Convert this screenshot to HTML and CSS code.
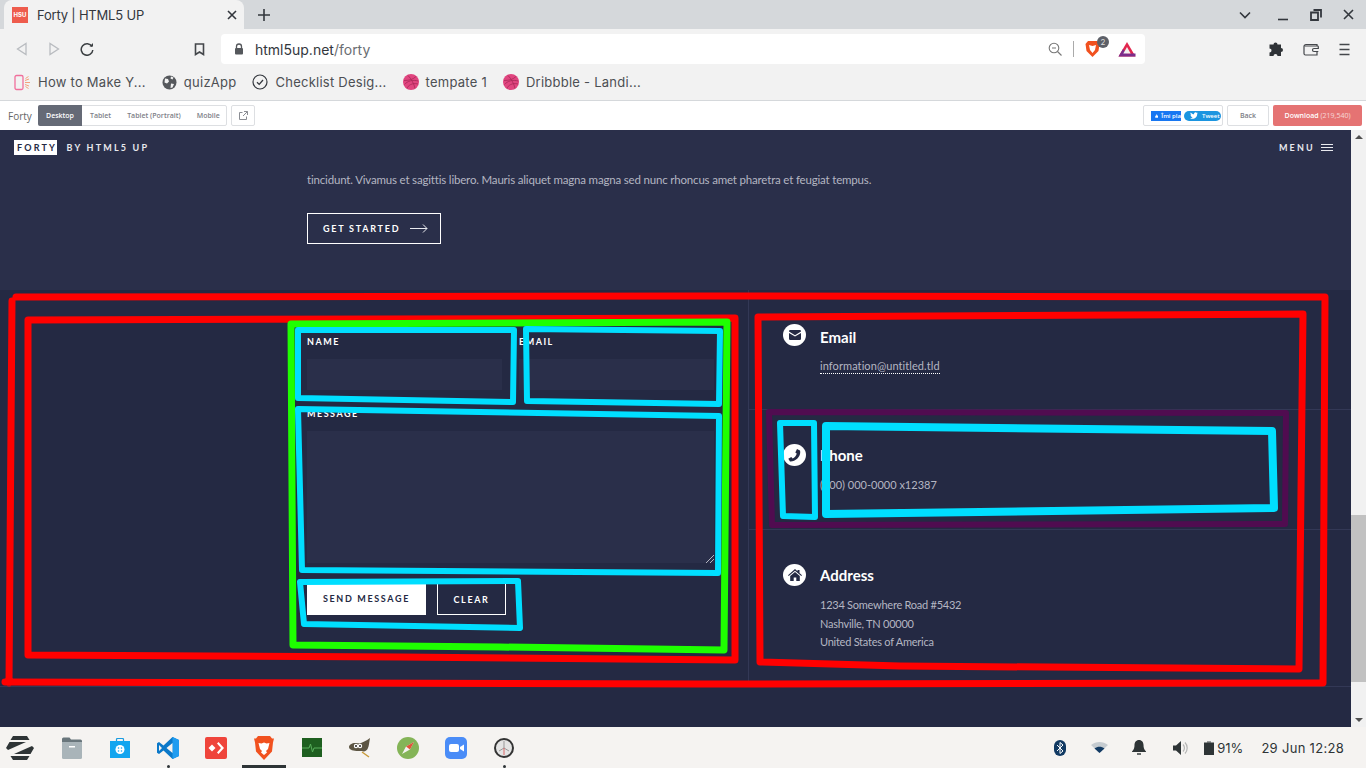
FILE: index.html
```html
<!DOCTYPE html>
<html lang="en">
<head>
    <meta charset="UTF-8">
    <meta name="viewport" content="width=device-width, initial-scale=1.0">
    <title>Forty | HTML5 UP</title>
    <link rel="stylesheet" href="styles.css">
</head>
<body>
    <!-- tab strip -->
    <div class="tabstrip">
        <div class="tab">
            <span class="favicon">HSU</span>
            <span class="tab-title">Forty | HTML5 UP</span>
            <svg class="tab-close" width="10" height="10" viewBox="0 0 10 10"><path d="M1 1l8 8M9 1L1 9" stroke="#33373d" stroke-width="1.6"/></svg>
        </div>
        <svg class="new-tab" width="14" height="14" viewBox="0 0 14 14"><path d="M7 1v12M1 7h12" stroke="#33373d" stroke-width="1.6"/></svg>
        <div class="window-controls">
            <svg class="tab-list" width="12" height="8" viewBox="0 0 12 8"><path d="M1 1.500l5 5 5-5" fill="none" stroke="#33373d" stroke-width="1.6"/></svg>
            <svg width="12" height="12" viewBox="0 0 12 12"><path d="M1 10.500h10" stroke="#33373d" stroke-width="1.6"/></svg>
            <svg width="12" height="12" viewBox="0 0 12 12"><path d="M3.500 1h7.500v7.500M1 3.500h7v7.500H1z" fill="none" stroke="#33373d" stroke-width="1.800"/></svg>
            <svg width="11" height="11" viewBox="0 0 11 11"><path d="M1 1l9 9M10 1l-9 9" stroke="#33373d" stroke-width="1.600"/></svg>
        </div>
    </div>

    <!-- address bar -->
    <div class="toolbar">
        <div class="nav-buttons">
            <svg width="12" height="14" viewBox="0 0 12 14"><path d="M10 1.500v11L1.500 7z" fill="none" stroke="#b9bcc0" stroke-width="1.300"/></svg>
            <svg width="12" height="14" viewBox="0 0 12 14"><path d="M2 1.500v11L10.500 7z" fill="none" stroke="#b9bcc0" stroke-width="1.300"/></svg>
            <svg width="14" height="14" viewBox="0 0 14 14"><path d="M12 4.500A5.800 5.800 0 1 0 12.800 8" fill="none" stroke="#3c4043" stroke-width="1.500"/><path d="M9.500 4.500h3.500V1z" fill="#3c4043"/></svg>
        </div>
        <svg class="bookmark-btn" width="11" height="13" viewBox="0 0 11 13"><path d="M1.500 1h8v10.500L5.500 9l-4 2.500z" fill="none" stroke="#44474b" stroke-width="1.600"/></svg>
        <div class="address">
            <svg width="10" height="12" viewBox="0 0 10 12"><path d="M2.500 5V3.500a2.500 2.500 0 0 1 5 0V5" fill="none" stroke="#55585c" stroke-width="1.300"/><rect x="1" y="5" width="8" height="6.500" rx="1" fill="#55585c"/></svg>
            <span class="url">html5up.net<span class="url-path">/forty</span></span>
            <svg class="zoom-out" width="14" height="14" viewBox="0 0 14 14"><circle cx="6" cy="6" r="4.800" fill="none" stroke="#777" stroke-width="1.100"/><path d="M4 6h4M9.500 9.500L13.500 13.500" stroke="#777" stroke-width="1.100"/></svg>
            <span class="address-sep"></span>
            <span class="shield">
                <svg width="15" height="18" viewBox="0 0 15 18"><path d="M3 1h9l2.500 3-1 7-6 6-6-6-1-7z" fill="#f1511f"/><path d="M4 5l3.500 1L11 5l-1 5-2.500 3L5 10z" fill="#fff"/></svg>
                <span class="shield-badge">2</span>
            </span>
            <svg class="bat" width="18" height="16" viewBox="0 0 18 16"><path d="M9 1L17.500 15.500H.5z" fill="#e2264d"/><path d="M.5 15.500L5 8l4 4.500h8.500v3z" fill="#7b2d8b"/><path d="M9 6l3.700 6.500H5.300z" fill="#f1f1f1"/></svg>
        </div>
        <div class="toolbar-actions">
            <svg width="15" height="15" viewBox="0 0 15 15"><path d="M5.500 2.500a2 2 0 0 1 4 0H13v3.500a2 2 0 0 1 0 4V14H9.500a2 2 0 0 0-4 0H1.500v-3.500a2 2 0 0 0 0-4V2.500z" fill="#2f3337"/></svg>
            <svg width="16" height="13" viewBox="0 0 16 13"><path d="M14 3V1.500H3A2 2 0 0 0 1 3.500v7A1.500 1.500 0 0 0 2.500 12H14V9" fill="none" stroke="#44474b" stroke-width="1.200"/><path d="M1.500 3h13a.8.8 0 0 1 .8.8v1.700H11a1.500 1.500 0 0 0 0 3h4.300" fill="none" stroke="#44474b" stroke-width="1.200"/></svg>
            <svg width="11" height="13" viewBox="0 0 11 13"><path d="M.5 1.500h10M.5 6.500h10M.5 11.500h10" stroke="#44474b" stroke-width="1.600"/></svg>
        </div>
    </div>

    <!-- bookmarks -->
    <div class="bookmarks">
        <div class="bookmark">
            <svg width="17" height="17" viewBox="0 0 17 17"><rect x="1" y="1.500" width="8" height="14" rx="1.500" fill="none" stroke="#f06f9b" stroke-width="1.300"/><path d="M11 8.500h5M11.500 4.500l3-2M11.500 12.500l3 2M11 6.500l4-1.500M11 10.500l4 1.500" stroke="#f4a07a" stroke-width="1"/></svg>
            <span>How to Make Y...</span>
        </div>
        <div class="bookmark">
            <svg width="15" height="15" viewBox="0 0 15 15"><circle cx="7.500" cy="7.500" r="7" fill="#55585c"/><path d="M3 3.500l3 .5 1 2.500-2 2-2.500-1zM9 8.500l3 .5-1.500 3.500-2 .5z M9 1.500l2.500 1-1 2-2-1z" fill="#f2f2f2"/></svg>
            <span>quizApp</span>
        </div>
        <div class="bookmark">
            <svg width="16" height="16" viewBox="0 0 16 16"><circle cx="8" cy="8" r="7" fill="none" stroke="#33373d" stroke-width="1.200"/><path d="M5 8.200l2.200 2.200L11 6" fill="none" stroke="#33373d" stroke-width="1.300"/></svg>
            <span>Checklist Desig...</span>
        </div>
        <div class="bookmark">
            <svg width="16" height="16" viewBox="0 0 16 16"><circle cx="8" cy="8" r="8" fill="#e0457f"/><path d="M5 1.500c3 3 6 8 7 13M1 6.500c5 0 9-1 12-4M1.500 10.500c3-3.500 8-5 14-3.500M4 14.500c1-3 5-6 11-4.500" fill="none" stroke="#a82858" stroke-width=".8"/></svg>
            <span>tempate 1</span>
        </div>
        <div class="bookmark">
            <svg width="16" height="16" viewBox="0 0 16 16"><circle cx="8" cy="8" r="8" fill="#e0457f"/><path d="M5 1.500c3 3 6 8 7 13M1 6.500c5 0 9-1 12-4M1.500 10.500c3-3.500 8-5 14-3.500M4 14.500c1-3 5-6 11-4.500" fill="none" stroke="#a82858" stroke-width=".8"/></svg>
            <span>Dribbble - Landi...</span>
        </div>
    </div>

    <!-- html5up preview bar -->
    <div class="previewbar">
        <span class="preview-name">Forty</span>
        <div class="device-tabs">
            <span class="device device-active">Desktop</span>
            <span class="device">Tablet</span>
            <span class="device">Tablet (Portrait)</span>
            <span class="device">Mobile</span>
        </div>
        <span class="popout">
            <svg width="9" height="9" viewBox="0 0 9 9"><path d="M7.500 5.500v3h-7v-7h3M5 .5h3.500V4M8.500 .5L4 5" fill="none" stroke="#8a8d93" stroke-width="1"/></svg>
        </span>
        <div class="social">
            <span class="fb-like">
                <svg width="8" height="8" viewBox="0 0 8 8"><path d="M0 3.500h1.800V8H0zM2.500 3.500L4 0c.9 0 1.200.7 1 1.500L4.800 3H8L7 8H2.500z" fill="#fff"/></svg>
                <span>Îmi pla</span>
            </span>
            <span class="tweet">
                <svg width="8" height="7" viewBox="0 0 8 7"><path d="M8 1l-.9.4.7-.9-.9.4A1.600 1.600 0 0 0 4.100 2.300C2.800 2.200 1.600 1.600.7.500.2 1.400.5 2.400 1.200 2.900L.5 2.700c0 .8.500 1.400 1.300 1.600H1.100c.2.600.8 1.100 1.500 1.100C2 6 1 6.300 0 6.200 3.700 8.100 7.400 5.500 7.200 1.800z" fill="#fff"/></svg>
                <span>Tweet</span>
            </span>
        </div>
        <span class="back-btn">Back</span>
        <span class="download-btn">Download <span class="download-count">(219,540)</span></span>
    </div>

    <!-- the page itself -->
    <div class="viewport">
        <div class="site">
            <header class="site-header">
                <div class="logo"><span class="logo-box">FORTY</span> BY HTML5 UP</div>
                <div class="menu-link">
                    MENU
                    <svg width="12" height="7" viewBox="0 0 12 7"><path d="M0 .5h12M0 3.500h12M0 6.500h12" stroke="#e8e9ee" stroke-width="1"/></svg>
                </div>
            </header>

            <section class="banner">
                <p class="banner-text">Nullam et orci eu lorem consequat tincidunt vivamus et sagittis magna sed nunc rhoncus condimentum sem. In efficitur ligula tate urna. Maecenas massa magna<br>tincidunt. Vivamus et sagittis libero. Mauris aliquet magna magna sed nunc rhoncus amet pharetra et feugiat tempus.</p>
                <a class="btn-started">
                    GET STARTED
                    <svg width="18" height="9" viewBox="0 0 18 9"><path d="M0 4.500h17M13 .5l4 4-4 4" fill="none" stroke="#e8e9ee" stroke-width="1"/></svg>
                </a>
            </section>

            <section class="contact">
                <form class="contact-form">
                    <div class="field-row">
                        <div class="field">
                            <label>NAME</label>
                            <div class="input"></div>
                        </div>
                        <div class="field">
                            <label>EMAIL</label>
                            <div class="input"></div>
                        </div>
                    </div>
                    <div class="field">
                        <label>MESSAGE</label>
                        <div class="textarea">
                            <svg class="resizer" width="8" height="8" viewBox="0 0 8 8"><path d="M0 8l8-8M4 8l4-4" stroke="#b4b6c0" stroke-width="1"/></svg>
                        </div>
                    </div>
                    <div class="form-actions">
                        <span class="btn-send">SEND MESSAGE</span>
                        <span class="btn-clear">CLEAR</span>
                    </div>
                </form>

                <div class="contact-info">
                    <div class="info-row">
                        <span class="info-icon">
                            <svg width="12" height="10" viewBox="0 0 12 10"><path d="M1.200 0h9.600A1.200 1.200 0 0 1 12 1.200v.4L6 5.200 0 1.600v-.4A1.200 1.200 0 0 1 1.200 0zM0 3l6 3.600L12 3v5.800A1.200 1.200 0 0 1 10.800 10H1.200A1.200 1.200 0 0 1 0 8.800z" fill="#242943"/></svg>
                        </span>
                        <div>
                            <h3>Email</h3>
                            <a class="info-link">information@untitled.tld</a>
                        </div>
                    </div>
                    <div class="info-row">
                        <span class="info-icon">
                            <svg width="13" height="13" viewBox="0 0 13 13"><path d="M9 0l3 1.500c1.500 5.500-4.500 11.500-10 11L.3 9.700l3-1.700 1.300 1.500C6.500 9 8.500 6.500 8.700 4.600L7.300 3.500z" fill="#242943"/></svg>
                        </span>
                        <div>
                            <h3>Phone</h3>
                            <p>(000) 000-0000 x12387</p>
                        </div>
                    </div>
                    <div class="info-row info-row-last">
                        <span class="info-icon">
                            <svg width="14" height="12" viewBox="0 0 14 12"><path d="M7 0l2.500 2.200V1h2v3l2.500 2.200-.7.800L7 1.700.7 7 0 6.200z" fill="#242943"/><path d="M2.200 7L7 3l4.800 4v5H8.300V8.500H5.700V12H2.200z" fill="#242943"/></svg>
                        </span>
                        <div>
                            <h3>Address</h3>
                            <p class="info-address">1234 Somewhere Road #5432<br>Nashville, TN 00000<br>United States of America</p>
                        </div>
                    </div>
                </div>
            </section>
        </div>

        <div class="scrollbar">
            <span class="arrow-up"></span>
            <div class="scroll-track"><div class="scroll-thumb"></div></div>
            <span class="arrow-down"></span>
        </div>
    </div>

    <!-- desktop panel -->
    <div class="taskbar">
        <div class="launcher">
            <span class="app"><svg width="28" height="24" viewBox="0 0 28 24"><path d="M7 0h14l2.500 4h-19zM4.500 20h19L21 24H7zM3.500 6H20L2 14l-2-2zM24.500 18H8l18-8 2 2z" fill="#2e3436"/></svg></span>
            <span class="app"><svg width="20" height="22" viewBox="0 0 20 22"><path d="M0 2a1.500 1.500 0 0 1 1.500-1.500h6l1.500 2h9.500A1.500 1.500 0 0 1 20 4v2H0z" fill="#69767c"/><path d="M0 5h20v15.500a1.500 1.500 0 0 1-1.500 1.500h-17A1.500 1.500 0 0 1 0 20.500z" fill="#a9b4b9"/><rect x="7" y="9" width="6" height="1.500" fill="#fff"/></svg></span>
            <span class="app"><svg width="20" height="20" viewBox="0 0 20 20"><path d="M6.500 3V1.500a1 1 0 0 1 1-1h5a1 1 0 0 1 1 1V3" fill="none" stroke="#1a9be0" stroke-width="1.200"/><rect y="3" width="20" height="17" fill="#12a5ef"/><circle cx="10" cy="11.500" r="4.500" fill="#fff"/><circle cx="8.500" cy="10" r=".8" fill="#12a5ef"/><circle cx="11.500" cy="10" r=".8" fill="#12a5ef"/><circle cx="8.500" cy="13" r=".8" fill="#12a5ef"/><circle cx="11.500" cy="13" r=".8" fill="#12a5ef"/></svg></span>
            <span class="app app-running"><svg width="22" height="22" viewBox="0 0 22 22"><path d="M15.500 0L22 3v16l-6.500 3L6.500 13.500 2 17l-2-1.200v-9.600L2 5l4.500 3.500z" fill="#0a78c9"/><path d="M15.500 0L22 3v16l-6.500 3z" fill="#1f9cf0"/><path d="M15.500 6L9.500 11l6 5zM2 8v6l3-3z" fill="#f5f3f1"/></svg></span>
            <span class="app"><svg width="22" height="22" viewBox="0 0 22 22"><rect width="22" height="22" rx="2" fill="#ef443b"/><path d="M7 7.500L10.500 11 7 14.500 3.500 11z" fill="#fff"/><path d="M12 6.500l1.500-1.500L19 11l-5.500 6-1.500-1.500L16 11z" fill="#fff"/></svg></span>
            <span class="app app-focused"><svg width="20" height="24" viewBox="0 0 20 24"><path d="M4 0h12l2 2.500 2 0-1 4-1 9-8 8.500-8-8.500-1-9-1-4 2 0z" fill="#f1511f"/><path d="M4.500 7l3 .5L10 6.500l2.500 1 3-.5-1.500 6-2 2 1 1.500-3 2.500-3-2.500 1-1.500-2-2z" fill="#fff"/></svg></span>
            <span class="app"><svg width="20" height="19" viewBox="0 0 20 19"><rect width="20" height="19" fill="#1e5f20"/><path d="M0 10h7l1.500-4 2 8 1.500-4h8" fill="none" stroke="#58b05c" stroke-width="1"/></svg></span>
            <span class="app"><svg width="22" height="20" viewBox="0 0 22 20"><path d="M0 9c0-2 3-4 6-4s4 1 6 0 5-2 9-5c-1 5-1 8-2 10-1 3-4 4-6 3l-4 0c-4 0-9-1-9-4z" fill="#5c5543"/><circle cx="7" cy="8" r="2.200" fill="#fff"/><circle cx="11" cy="8" r="2.200" fill="#fff"/><circle cx="7" cy="8" r="1" fill="#222"/><circle cx="11" cy="8" r="1" fill="#222"/><path d="M13 14l7 5" stroke="#c89a3a" stroke-width="1.500"/></svg></span>
            <span class="app"><svg width="22" height="22" viewBox="0 0 22 22"><circle cx="11" cy="11" r="11" fill="#84b457"/><path d="M17 5l-8 4.500L5 17l8-4.500z" fill="#f3f3ee"/><path d="M17 5l-8 4.500 4 3z" fill="#e0543a"/></svg></span>
            <span class="app"><svg width="22" height="22" viewBox="0 0 22 22"><rect width="22" height="22" rx="5" fill="#4a8cf7"/><rect x="4" y="7" width="10" height="8" rx="2" fill="#fff"/><path d="M15 10l4-2.500v7L15 12z" fill="#fff"/></svg></span>
            <span class="app app-running"><svg width="20" height="20" viewBox="0 0 20 20"><circle cx="10" cy="10" r="9" fill="#e4e4e4" stroke="#333" stroke-width="2"/><path d="M10 10V3M10 10l5 3M10 10l-5 3" stroke="#999" stroke-width="1"/><path d="M10 10v7" stroke="#d66" stroke-width="1"/></svg></span>
        </div>
        <div class="tray">
            <svg class="tray-bt" width="12" height="16" viewBox="0 0 12 16"><rect width="12" height="16" rx="6" fill="#123a63"/><path d="M3 5l6 6-3 2.500v-11L9 5l-6 6" fill="none" stroke="#fff" stroke-width="1"/></svg>
            <svg class="tray-wifi" width="17" height="11" viewBox="0 0 17 11"><path d="M0 3C5-1 12-1 17 3l-8.500 8z" fill="#c5cbd0"/><path d="M3.500 6.500c3-2.500 7-2.500 10 0l-5 4.500z" fill="#123a63"/></svg>
            <svg class="tray-bell" width="14" height="15" viewBox="0 0 14 15"><path d="M7 0c3 0 4.500 2.500 4.500 5s.5 4.500 2.500 6.500V12H0v-.5C2 9.500 2.500 7.500 2.500 5S4 0 7 0z" fill="#2e3436"/><rect x="5" y="13.300" width="4" height="1.400" fill="#2e3436"/></svg>
            <svg class="tray-vol" width="15" height="14" viewBox="0 0 15 14"><path d="M0 4.500h3L8 0v14L3 9.500H0z" fill="#2e3436"/><path d="M10 3.500a5 5 0 0 1 0 7M12 1.500a8 8 0 0 1 0 11" fill="none" stroke="#b5b5b5" stroke-width="1.200"/></svg>
            <div class="tray-battery">
                <svg width="10" height="14" viewBox="0 0 10 14"><rect x="3" width="4" height="2" fill="#9a9c9d"/><rect y="1.500" width="10" height="12.500" fill="#2e3436"/></svg>
                <span>91%</span>
            </div>
            <span class="tray-clock">29 Jun 12:28</span>
        </div>
    </div>

    <!-- marker strokes drawn on the screenshot -->
    <svg class="markup" width="1366" height="768" viewBox="0 0 1366 768">
        <g fill="none" stroke-linejoin="round" stroke-linecap="round">
            <path d="M9 683L12 301M16 297L700 296 1325 297 1323 683 700 684 5 682" stroke="#ff0000" stroke-width="7"/>
            <path d="M28 655L28 320 735 318 735 660 400 657z" stroke="#ff0000" stroke-width="7"/>
            <path d="M758 317L1303 314 1299 669 900 666 760 662z" stroke="#ff0000" stroke-width="7"/>
            <path d="M769 412L1286 413 1285 524 772 525z" stroke="#500c50" stroke-width="6"/>
            <path d="M293 645L291 324 727 322 724 650 500 647z" stroke="#1eff00" stroke-width="7"/>
            <path d="M298 330L514 330 513 402 298 398z" stroke="#00deff" stroke-width="6"/>
            <path d="M526 329L720 331 719 404 527 401z" stroke="#00deff" stroke-width="6"/>
            <path d="M298 409L719 416 718 573 302 570z" stroke="#00deff" stroke-width="6"/>
            <path d="M300 582L518 581 520 628 304 624z" stroke="#00deff" stroke-width="6"/>
            <path d="M780 423L814 423 815 517 783 516z" stroke="#00deff" stroke-width="6"/>
            <path d="M826 426L1272 431 1274 508 826 514z" stroke="#00deff" stroke-width="8"/>
        </g>
    </svg>
</body>
</html>
```

FILE: styles.css
```css
* {
    box-sizing: border-box;
}

body {
    position: relative;
    display: flex;
    flex-direction: column;
    width: 1366px;
    height: 100vh;
    margin: 0;
    overflow: hidden;
    font-family: Inter, "Noto Sans", sans-serif;
    color: #3c4043;
    background-color: #f2f2f2;
}

/* Tab strip */
.tabstrip {
    display: flex;
    align-items: center;
    height: 29px;
    padding-left: 4px;
    background-color: #d5d8db;
}

.tab {
    display: flex;
    align-items: center;
    width: 240px;
    height: 29px;
    padding: 0 8px;
    background-color: #f2f2f2;
    border-radius: 8px 8px 0 0;
}

.favicon {
    width: 16px;
    height: 16px;
    background-color: #ee5c4d;
    color: #fff;
    font-size: 6px;
    font-weight: 700;
    line-height: 16px;
    text-align: center;
}

.tab-title {
    flex: 1;
    margin-left: 9px;
    font-size: 13px;
    letter-spacing: -0.2px;
    color: #33373d;
}

.tab-close {
    margin-right: -1px;
}

.new-tab {
    margin-left: 13px;
}

.window-controls {
    display: flex;
    align-items: center;
    gap: 21px;
    margin-left: auto;
    padding-right: 12px;
}

.tab-list {
    margin-right: 5px;
}

/* Toolbar */
.toolbar {
    display: flex;
    align-items: center;
    height: 37px;
    padding: 3px 0 0 16px;
    background-color: #f2f2f2;
}

.nav-buttons {
    display: flex;
    align-items: center;
    gap: 20px;
    width: 178px;
}

.bookmark-btn {
    margin-right: 16px;
}

.address {
    display: flex;
    align-items: center;
    width: 924px;
    height: 30px;
    padding: 0 9px 0 13px;
    background-color: #fff;
    border-radius: 4px;
}

.url {
    flex: 1;
    margin-left: 11px;
    font-size: 14px;
    color: #33373d;
}

.url-path {
    color: #6a6d72;
}

.address-sep {
    width: 1px;
    height: 16px;
    margin: 0 11px;
    background-color: #aaa;
}

.shield {
    position: relative;
    display: flex;
    width: 33px;
}

.shield-badge {
    position: absolute;
    top: -4px;
    left: 12px;
    width: 12px;
    height: 12px;
    border-radius: 50%;
    background-color: #5d6068;
    color: #ddd;
    font-size: 8px;
    line-height: 12px;
    text-align: center;
}

.toolbar-actions {
    display: flex;
    align-items: center;
    gap: 20px;
    margin-left: 123px;
}

/* Bookmarks */
.bookmarks {
    display: flex;
    align-items: center;
    height: 35px;
    padding: 0 0 2px 14px;
    gap: 16px;
    background-color: #f2f2f2;
    border-bottom: 1px solid #d5d8db;
}

.bookmark {
    display: flex;
    align-items: center;
    gap: 7px;
    font-size: 13px;
    letter-spacing: 0.25px;
    color: #4c4f53;
}

/* Preview bar */
.previewbar {
    display: flex;
    align-items: center;
    height: 29px;
    padding: 0 4px 0 8px;
    background-color: #fff;
    font-family: "Open Sans", sans-serif;
    font-size: 7px;
    font-weight: 600;
    color: #7d8087;
    white-space: nowrap;
}

.preview-name {
    width: 30px;
    font-size: 10px;
    font-weight: 400;
    color: #666;
}

.device-tabs {
    display: flex;
    align-items: center;
    width: 189px;
    height: 21px;
    border: 1px solid #dddfe2;
    border-radius: 2px;
}

.device {
    padding: 0 8px;
    line-height: 19px;
}

.device-active {
    width: 44px;
    margin: -1px 0 -1px -1px;
    line-height: 21px;
    background-color: #656a76;
    border-radius: 2px 0 0 2px;
    color: #fff;
}

.popout {
    display: flex;
    align-items: center;
    justify-content: center;
    width: 24px;
    height: 21px;
    margin-left: 4px;
    border: 1px solid #dddfe2;
    border-radius: 2px;
}

.social {
    display: flex;
    align-items: center;
    gap: 3px;
    width: 80px;
    height: 21px;
    margin-left: auto;
    padding-left: 7px;
    border: 1px solid #dddfe2;
    border-radius: 2px;
}

.fb-like {
    display: flex;
    align-items: center;
    gap: 3px;
    width: 30px;
    height: 10px;
    padding-left: 4px;
    overflow: hidden;
    background-color: #1877f2;
    color: #fff;
    font-size: 6px;
}

.tweet {
    display: flex;
    align-items: center;
    gap: 4px;
    width: 37px;
    height: 10px;
    padding-left: 6px;
    border-radius: 5px;
    background-color: #1b95e0;
    color: #fff;
    font-size: 6px;
}

.back-btn {
    width: 42px;
    height: 21px;
    margin-left: 4px;
    border: 1px solid #dddfe2;
    border-radius: 2px;
    line-height: 19px;
    text-align: center;
}

.download-btn {
    width: 89px;
    height: 21px;
    margin-left: 4px;
    background-color: #e57373;
    border-radius: 2px;
    color: #fff;
    line-height: 21px;
    text-align: center;
}

.download-count {
    font-weight: 400;
    opacity: 0.7;
}

/* The page */
.viewport {
    display: flex;
    flex: 1;
    min-height: 0;
}

.site {
    position: relative;
    flex: 1;
    overflow: hidden;
    background-color: #242943;
    font-family: Lato, "Noto Sans", sans-serif;
    color: #fff;
}

.site-header {
    position: absolute;
    top: 0;
    left: 0;
    right: 0;
    display: flex;
    align-items: center;
    justify-content: space-between;
    height: 35px;
    padding: 0 18px 0 14px;
    background-color: #2a2f4a;
    font-size: 9px;
    font-weight: 700;
    letter-spacing: 2.2px;
    color: #e8e9ee;
}

.logo-box {
    display: inline-block;
    margin-right: 5px;
    padding: 0 0 0 3px;
    height: 15px;
    background-color: #fff;
    color: #242943;
    line-height: 15px;
}

.menu-link {
    display: flex;
    align-items: center;
    gap: 6px;
}

.banner {
    height: 160px;
    padding: 18px 0 0 307px;
    background-color: #2a2f4a;
}

.banner-text {
    margin: 0 0 23px;
    font-size: 11.500px;
    letter-spacing: -0.18px;
    line-height: 21px;
    white-space: nowrap;
    color: #b4b6c2;
}

.btn-started {
    display: inline-flex;
    align-items: center;
    gap: 10px;
    height: 31px;
    padding: 0 12px 0 15px;
    border: 1px solid #fff;
    font-size: 9px;
    font-weight: 700;
    letter-spacing: 1.75px;
}

.contact {
    display: flex;
    height: 397px;
    border-bottom: 1px solid #333856;
}

.contact-form {
    width: 749px;
    padding: 45px 34px 0 307px;
    border-right: 1px solid #333856;
}

.field-row {
    display: flex;
    gap: 17px;
    margin-bottom: 17px;
}

.field {
    flex: 1;
}

label {
    display: block;
    height: 24px;
    font-size: 9px;
    font-weight: 700;
    letter-spacing: 1.5px;
    line-height: 13px;
}

.input {
    height: 31px;
    background-color: #2a2f4a;
}

.textarea {
    position: relative;
    height: 132px;
    background-color: #2a2f4a;
}

.resizer {
    position: absolute;
    right: 0;
    bottom: 0;
}

.form-actions {
    display: flex;
    gap: 11px;
    margin-top: 20px;
}

.btn-send,
.btn-clear {
    height: 32px;
    font-size: 9px;
    font-weight: 700;
    letter-spacing: 1.65px;
    line-height: 31px;
    text-align: center;
}

.btn-send {
    width: 119px;
    background-color: #fff;
    color: #242943;
}

.btn-clear {
    width: 69px;
    border: 1px solid #fff;
}

.contact-info {
    flex: 1;
}

.info-row {
    display: flex;
    gap: 14px;
    height: 120px;
    padding: 34px 0 0 34px;
    border-bottom: 1px solid #333856;
}

.info-row-last {
    height: 156px;
    border-bottom: none;
}

.info-icon {
    display: flex;
    flex-shrink: 0;
    align-items: center;
    justify-content: center;
    width: 23px;
    height: 22px;
    border-radius: 50%;
    background-color: #fff;
}

.info-row h3 {
    margin: 2px 0 12px;
    font-size: 15px;
    font-weight: 700;
    line-height: 18px;
}

.info-row:first-child h3 {
    margin-top: 4px;
}

.info-row p,
.info-link {
    margin: 0;
    font-size: 11px;
    line-height: 18.500px;
    color: #b4b6c2;
}

.info-address {
    letter-spacing: -0.25px;
}

.info-link {
    display: block;
    width: fit-content;
    line-height: 15px;
    letter-spacing: 0.08px;
    border-bottom: 1px dotted #fff;
}

/* Scrollbar */
.scrollbar {
    display: flex;
    flex-direction: column;
    align-items: center;
    width: 15px;
    background-color: #f1f1f1;
}

.scroll-track {
    flex: 1;
    width: 100%;
    padding-top: 371px;
}

.scroll-thumb {
    height: 167px;
    background-color: #c1c1c1;
}

.arrow-up,
.arrow-down {
    width: 0;
    height: 0;
    margin: 5px 0;
    border-left: 4px solid transparent;
    border-right: 4px solid transparent;
}

.arrow-up {
    border-bottom: 4px solid #505050;
}

.arrow-down {
    border-top: 4px solid #505050;
}

/* Desktop panel */
.taskbar {
    display: flex;
    align-items: center;
    justify-content: space-between;
    height: 41px;
    background-color: #f5f3f1;
}

.launcher {
    display: flex;
    margin-left: -2px;
}

.app {
    position: relative;
    display: flex;
    align-items: center;
    justify-content: center;
    width: 48px;
    height: 41px;
}

.app:first-child {
    margin-right: 2px;
    left: -2px;
}

.app-running::after {
    content: "";
    position: absolute;
    bottom: 0;
    left: 23px;
    width: 3px;
    height: 3px;
    border-radius: 50%;
    background-color: #2e3436;
}

.app-focused::after {
    content: "";
    position: absolute;
    bottom: 0;
    left: 2px;
    width: 44px;
    height: 3px;
    background-color: #2e3436;
}

.tray {
    display: flex;
    align-items: center;
    padding-right: 22px;
    font-size: 13px;
    color: #2e3436;
}

.tray-wifi {
    margin-left: 25px;
}

.tray-bell {
    margin-left: 24px;
}

.tray-vol {
    margin-left: 27px;
}

.tray-battery {
    display: flex;
    align-items: center;
    gap: 3px;
    margin-left: 16px;
}

.tray-clock {
    margin-left: 18px;
    letter-spacing: 0.3px;
}

/* Marker strokes on the screenshot */
.markup {
    position: absolute;
    top: 0;
    left: 0;
    pointer-events: none;
}
```
